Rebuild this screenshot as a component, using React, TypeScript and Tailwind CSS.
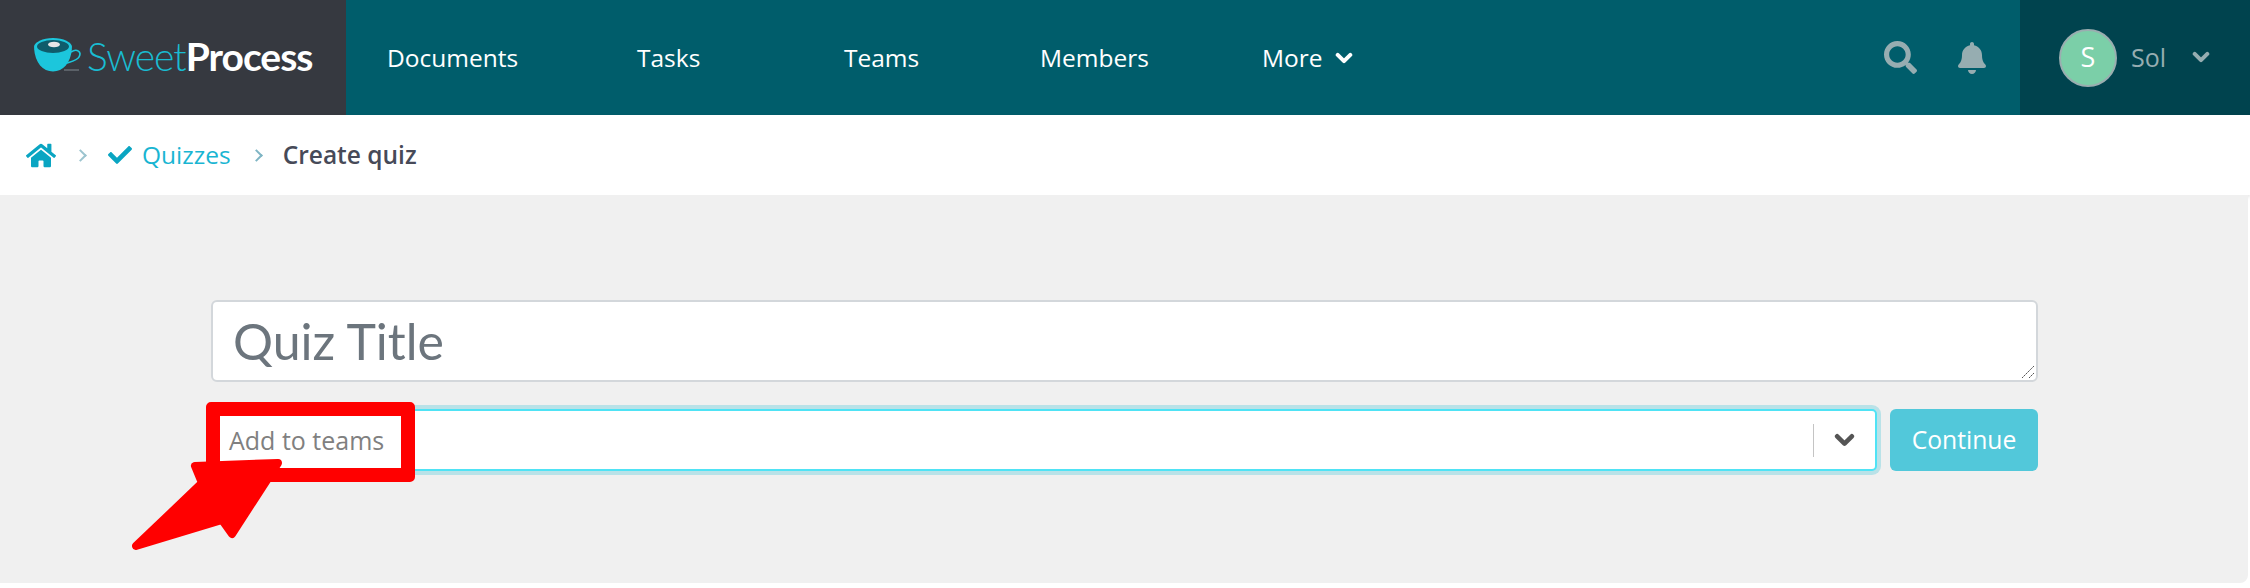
import React from 'react'
import { FaHome, FaCheck, FaSearch, FaBell } from 'react-icons/fa'

const navItems = [
  { label: 'Documents', width: 'w-[250px]' },
  { label: 'Tasks', width: 'w-[207px]' },
  { label: 'Teams', width: 'w-[196px]' },
  { label: 'Members', width: 'w-[222px]' },
]

const sans = 'font-["Open_Sans","Noto_Sans",sans-serif]'

const Chevron: React.FC<{ className: string }> = ({ className }) => (
  <svg viewBox="0 0 20 14" className={className} fill="none" stroke="currentColor" strokeWidth="4.4" strokeLinecap="round" strokeLinejoin="round">
    <path d="M3 3 L10 10 L17 3" />
  </svg>
)

const CupLogo = () => (
  <svg width="50" height="36" viewBox="0 0 50 36" className="shrink-0">
    <ellipse cx="20" cy="9" rx="19" ry="9" fill="#1cc6dc" />
    <ellipse cx="20" cy="8.5" rx="16" ry="6.5" fill="#0f5c6b" />
    <ellipse cx="21" cy="6.5" rx="6" ry="2.8" fill="#e6e6e6" />
    <path d="M1 10 C2 25 10 33.5 20 33.5 C30 33.5 38 25 39 10 C32 17 8 17 1 10 Z" fill="#1cc6dc" />
    <path d="M38 14 C44 10 49 14 46 19 C44 23 36 24 31 26" fill="none" stroke="#1cc6dc" strokeWidth="1.6" />
    <path d="M31 32 H46" stroke="#5b6168" strokeWidth="2" />
  </svg>
)

export default function App() {
  return (
    <div className={`w-[2250px] h-[588px] bg-white overflow-hidden flex flex-col ${sans}`}>
      <header className="h-[115px] flex shrink-0 bg-[#005d6b]">
        <div className="w-[346px] bg-[#363940] flex items-center pl-[33px] pb-[3px]">
          <CupLogo />
          <span className='ml-[4px] text-[39px] tracking-[-1px] leading-none font-["Lato",sans-serif]'>
            <span className="font-light text-[#19bcd2]">Sweet</span>
            <span className="font-bold text-white">Process</span>
          </span>
        </div>
        <nav className="flex items-center pl-[41px] pt-[2px] flex-1 text-[24.5px] text-white">
          {navItems.map((item) => (
            <a key={item.label} className={item.width}>{item.label}</a>
          ))}
          <a className="flex items-center gap-[12px]">
            More <Chevron className="w-[18px] h-[13px]" />
          </a>
        </nav>
        <div className="flex items-center gap-[40px] pr-[33px] text-[#96adb1]">
          <FaSearch className="w-[33px] h-[33px]" />
          <FaBell className="w-[30px] h-[32px]" />
        </div>
        <div className="w-[230px] bg-[#00434e] flex items-center pl-[39px]">
          <div className="w-[58px] h-[58px] rounded-full bg-[#7bcfa8] border-2 border-[#9aaeb0] flex items-center justify-center text-white text-[27px]">S</div>
          <span className="ml-[14px] text-[25px] text-[#96adb1]">Sol</span>
          <Chevron className="ml-[26px] w-[18px] h-[13px] text-[#96adb1]" />
        </div>
      </header>

      <div className="h-[80px] shrink-0 flex items-center pl-[26px] text-[24.5px] shadow-[0_2px_4px_rgba(0,0,0,0.12)] relative">
        <FaHome className="w-[30px] h-[27px] text-[#0aa5c2]" />
        <span className="ml-[20px] w-[9px] h-[9px] border-t-2 border-r-2 border-[#9cc4cf] rotate-45" />
        <FaCheck className="ml-[21px] w-[28px] h-[24px] text-[#0aa5c2]" />
        <span className="ml-[8px] text-[#19b5d2]">Quizzes</span>
        <span className="ml-[21px] w-[9px] h-[9px] border-t-2 border-r-2 border-[#7fb5c4] rotate-45" />
        <span className="ml-[22px] font-semibold text-[#474a58]">Create quiz</span>
      </div>

      <main className="w-[2248px] h-[388px] bg-[#f0f0f0] rounded-br-lg pt-[105px] pl-[211px] relative">
        <div className="w-[1827px] flex flex-col gap-[27px]">
          <div className='h-[82px] bg-white border-2 border-[#d3d7db] rounded-[6px] flex items-center pl-[20px] text-[50px] text-[#6c757d] relative font-["Lato",sans-serif]'>
            Quiz Title
            <svg width="14" height="14" viewBox="0 0 14 14" className="absolute right-[1px] bottom-[1px]">
              <path d="M1 13 L13 1 M8 13 L13 8" stroke="#555" strokeWidth="1" strokeDasharray="2 0.6" />
            </svg>
          </div>
          <div className="flex gap-[13px]">
            <div className="w-[1666px] h-[62px] bg-white border-2 border-[#4fe3f5] rounded-[5px] shadow-[0_0_0_4px_#b9e2e8] flex items-center pl-[16px] pt-[1px] text-[25px] text-[#808080]">
              <span className="flex-1">Add to teams</span>
              <span className="w-[1px] h-[33px] bg-[#c4c4c4]" />
              <Chevron className="mx-[20px] w-[21px] h-[15px] text-[#555]" />
            </div>
            <button className="w-[148px] h-[62px] bg-[#52c8da] rounded-[6px] text-white text-[24.7px]">Continue</button>
          </div>
        </div>

        <div className="absolute left-[206px] top-[207px] w-[209px] h-[80px] border-[14px] border-[#ff0000] rounded-[5px]" />
        <svg width="160" height="110" viewBox="0 0 160 110" className="absolute left-[125px] top-[255px]">
          <path d="M11 96 L77 33 L70 16 L153 13 L107 84 L97 70 Z" fill="#ff0000" stroke="#ff0000" strokeWidth="8" strokeLinejoin="round" />
        </svg>
      </main>
    </div>
  )
}
